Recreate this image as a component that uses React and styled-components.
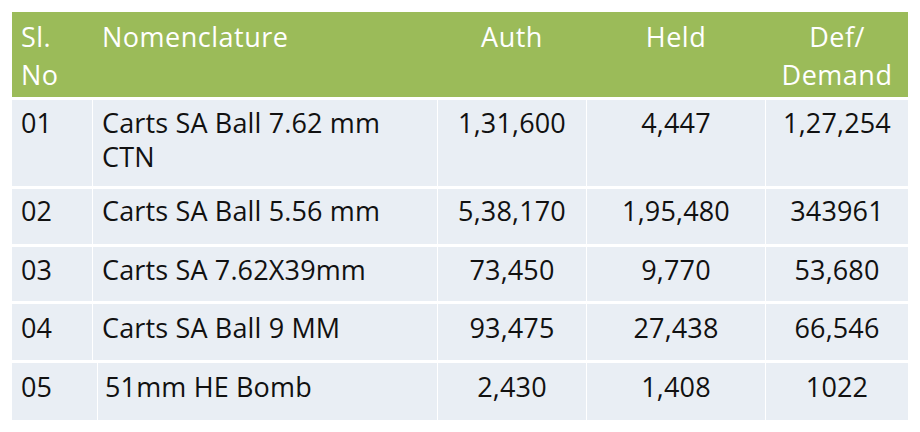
import React from "react";
import styled, { createGlobalStyle } from "styled-components";

const Global = createGlobalStyle`
  html, body { margin: 0; padding: 0; background: #ffffff; }
  body { font-family: "Open Sans", "Noto Sans", "Liberation Sans", sans-serif; }
`;

const Page = styled.div`
  width: 920px;
  height: 432px;
  padding: 12px 0 0 12px;
  box-sizing: border-box;
  background: #ffffff;
`;

const Table = styled.div`
  width: 896px;
  display: flex;
  flex-direction: column;
  gap: 3px;
`;

const HeaderRow = styled.div`
  display: grid;
  grid-template-columns: 80px 344px 148px 178px 142px;
  column-gap: 1px;
  height: 85px;
  background: #9bbb59;
`;

const HeadCell = styled.div`
  box-sizing: border-box;
  color: #ffffff;
  font-size: 27px;
  letter-spacing: 0.5px;
  line-height: 38px;
  padding-top: 6px;
  padding-left: ${(p) => (p.$align === "center" ? 0 : 9)}px;
  text-align: ${(p) => p.$align || "left"};
`;

const Row = styled.div`
  display: grid;
  grid-template-columns: ${(p) => p.$cols || "80px 344px 148px 178px 142px"};
  column-gap: 1px;
  height: ${(p) => p.$h}px;
  background: #ffffff;
`;

const Cell = styled.div`
  box-sizing: border-box;
  background: #e9eef4;
  color: #111111;
  font-size: 27px;
  letter-spacing: 0.15px;
  line-height: 34px;
  padding-top: ${(p) => p.$pt}px;
  padding-left: ${(p) => (p.$align === "center" ? 0 : p.$pl ?? 9)}px;
  padding-right: ${(p) => (p.$wrap ? 20 : 0)}px;
  text-align: ${(p) => p.$align || "left"};
`;

const rows = [
  { no: "01", name: "Carts SA Ball 7.62 mm CTN", auth: "1,31,600", held: "4,447", def: "1,27,254", h: 86, pt: 6 },
  { no: "02", name: "Carts SA Ball 5.56 mm", auth: "5,38,170", held: "1,95,480", def: "343961", h: 55, pt: 5 },
  { no: "03", name: "Carts SA 7.62X39mm", auth: "73,450", held: "9,770", def: "53,680", h: 54, pt: 6 },
  { no: "04", name: "Carts SA Ball 9 MM", auth: "93,475", held: "27,438", def: "66,546", h: 56, pt: 7 },
  {
    no: "05",
    name: "51mm HE Bomb",
    auth: "2,430",
    held: "1,408",
    def: "1022",
    h: 57,
    pt: 7,
    pl: 7,
    cols: "85px 339px 148px 178px 142px",
  },
];

export default function App() {
  return (
    <Page>
      <Global />
      <Table>
        <HeaderRow>
          <HeadCell>
            Sl.
            <br />
            No
          </HeadCell>
          <HeadCell>Nomenclature</HeadCell>
          <HeadCell $align="center">Auth</HeadCell>
          <HeadCell $align="center">Held</HeadCell>
          <HeadCell $align="center">
            Def/
            <br />
            Demand
          </HeadCell>
        </HeaderRow>
        {rows.map((r) => (
          <Row key={r.no} $h={r.h} $cols={r.cols}>
            <Cell $pt={r.pt}>{r.no}</Cell>
            <Cell $pt={r.pt} $pl={r.pl} $wrap>
              {r.name}
            </Cell>
            <Cell $pt={r.pt} $align="center">
              {r.auth}
            </Cell>
            <Cell $pt={r.pt} $align="center">
              {r.held}
            </Cell>
            <Cell $pt={r.pt} $align="center">
              {r.def}
            </Cell>
          </Row>
        ))}
      </Table>
    </Page>
  );
}
